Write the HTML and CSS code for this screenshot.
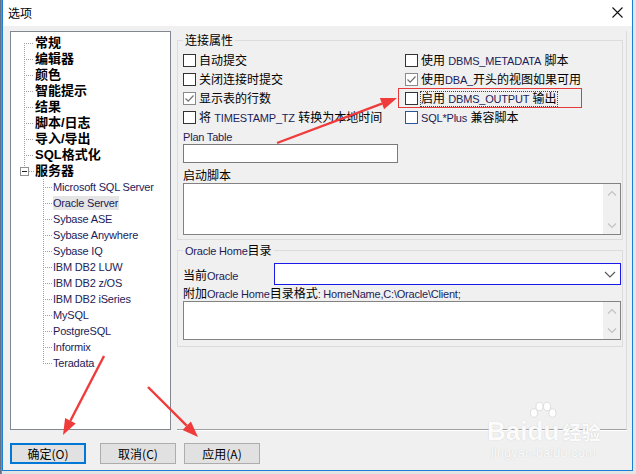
FILE: index.html
```html
<!DOCTYPE html>
<html lang="zh-CN">
<head>
    <meta charset="UTF-8">
    <title>选项</title>
    <link rel="stylesheet" href="styles.css">
</head>
<body>
    <div class="win">
        <div class="titlebar">
            <span class="title">选项</span>
            <svg class="close" width="11" height="11" viewBox="0 0 11 11"><path d="M0.5 0.5 L10.5 10.5 M10.5 0.5 L0.5 10.5" stroke="#111" stroke-width="1.1" fill="none"/></svg>
        </div>
        <div class="body">
            <div class="main">
                <!-- 왼쪽 트리 -->
                <div class="tree">
                    <ul class="lv1">
                        <li class="first">常规</li>
                        <li>编辑器</li>
                        <li>颜色</li>
                        <li>智能提示</li>
                        <li>结果</li>
                        <li>脚本/日志</li>
                        <li>导入/导出</li>
                        <li>SQL格式化</li>
                        <li class="open"><span class="exp"><i></i></span>服务器</li>
                    </ul>
                    <ul class="lv2">
                        <li><span class="en">Microsoft SQL Server</span></li>
                        <li><span class="en sel">Oracle Server</span></li>
                        <li><span class="en">Sybase ASE</span></li>
                        <li><span class="en">Sybase Anywhere</span></li>
                        <li><span class="en">Sybase IQ</span></li>
                        <li><span class="en">IBM DB2 LUW</span></li>
                        <li><span class="en">IBM DB2 z/OS</span></li>
                        <li><span class="en">IBM DB2 iSeries</span></li>
                        <li><span class="en">MySQL</span></li>
                        <li><span class="en">PostgreSQL</span></li>
                        <li><span class="en">Informix</span></li>
                        <li class="last"><span class="en">Teradata</span></li>
                    </ul>
                </div>
                <!-- 오른쪽 설정 -->
                <div class="panel">
                    <fieldset class="grp grp1">
                        <legend>连接属性</legend>
                        <div class="checks">
                            <label class="chk"><span class="cb"></span>自动提交</label>
                            <label class="chk"><span class="cb"></span>使用&nbsp;<span class="en">DBMS_METADATA</span>&nbsp;脚本</label>
                            <label class="chk"><span class="cb"></span>关闭连接时提交</label>
                            <label class="chk"><span class="cb on"><svg width="11" height="11" viewBox="0 0 11 11"><path d="M1.5 5.5 L4.2 8.2 L9.5 2.5" stroke="#707070" stroke-width="1.2" fill="none"/></svg></span>使用<span class="en">DBA_</span>开头的视图如果可用</label>
                            <label class="chk"><span class="cb on"><svg width="11" height="11" viewBox="0 0 11 11"><path d="M1.5 5.5 L4.2 8.2 L9.5 2.5" stroke="#707070" stroke-width="1.2" fill="none"/></svg></span>显示表的行数</label>
                            <label class="chk"><span class="cb"></span><span class="focus">启用&nbsp;<span class="en">DBMS_OUTPUT</span>&nbsp;输出</span></label>
                            <label class="chk"><span class="cb"></span>将&nbsp;<span class="en">TIMESTAMP_TZ</span>&nbsp;转换为本地时间</label>
                            <label class="chk"><span class="cb blue"></span><span class="en">SQL*Plus</span>&nbsp;兼容脚本</label>
                        </div>
                        <div class="cap en">Plan Table</div>
                        <div class="input"></div>
                        <div class="cap cap2">启动脚本</div>
                        <div class="memo memo1">
                            <div class="memo-text"></div>
                            <div class="vscroll">
                                <svg width="10" height="7" viewBox="0 0 10 7"><path d="M1 5.5 L5 1.5 L9 5.5" stroke="#c2c2c2" stroke-width="1.2" fill="none"/></svg>
                                <svg width="10" height="7" viewBox="0 0 10 7"><path d="M1 1.5 L5 5.5 L9 1.5" stroke="#c2c2c2" stroke-width="1.2" fill="none"/></svg>
                            </div>
                        </div>
                    </fieldset>
                    <fieldset class="grp grp2">
                        <legend><span class="en">Oracle Home</span>目录</legend>
                        <div class="combo-row">
                            <span class="combo-label">当前<span class="en">Oracle</span></span>
                            <div class="combo">
                                <svg width="12" height="7" viewBox="0 0 12 7"><path d="M1 1 L6 6 L11 1" stroke="#555" stroke-width="1.1" fill="none"/></svg>
                            </div>
                        </div>
                        <div class="cap cap3">附加<span class="en">Oracle Home</span>目录格式<span class="en">: HomeName,C:\Oracle\Client;</span></div>
                        <div class="memo memo2">
                            <div class="memo-text"></div>
                            <div class="vscroll">
                                <svg width="10" height="7" viewBox="0 0 10 7"><path d="M1 5.5 L5 1.5 L9 5.5" stroke="#c2c2c2" stroke-width="1.2" fill="none"/></svg>
                                <svg width="10" height="7" viewBox="0 0 10 7"><path d="M1 1.5 L5 5.5 L9 1.5" stroke="#c2c2c2" stroke-width="1.2" fill="none"/></svg>
                            </div>
                        </div>
                    </fieldset>
                </div>
            </div>
            <div class="buttons">
                <button class="btn primary">确定(O)</button>
                <button class="btn cancel">取消(C)</button>
                <button class="btn apply">应用(A)</button>
            </div>
        </div>
        <!-- 워터마크 -->
        <div class="watermark">
            <div class="wm-top">
                <span class="wm-bai">Bai</span>
                <span class="wm-du">
                    <svg class="paw" width="32" height="20" viewBox="0 0 32 20">
                        <ellipse cx="7" cy="11" rx="3.5" ry="4.2"/>
                        <ellipse cx="12.5" cy="4.5" rx="3.5" ry="4.2"/>
                        <ellipse cx="20" cy="4.5" rx="3.5" ry="4.2"/>
                        <ellipse cx="25.5" cy="11" rx="3.5" ry="4.2"/>
                    </svg>du</span>
                <span class="wm-jy">经验</span>
            </div>
            <div class="wm-url">jingyan.baidu.com</div>
        </div>
    </div>

    <!-- 빨간 화살표 표시 -->
    <svg class="marks" width="636" height="474" viewBox="0 0 636 474">
        <rect x="398.5" y="88.5" width="183" height="19" fill="none" stroke="#e53a3a" stroke-width="1"/>
        <line x1="277" y1="143" x2="382" y2="103.6" stroke="#ef3b3b" stroke-width="2.4"/>
        <polygon points="397,98 384.1,109.2 379.9,98" fill="#ef3b3b"/>
        <line x1="104" y1="356" x2="70.4" y2="420.8" stroke="#ef3b3b" stroke-width="2.4"/>
        <polygon points="63,435 75.7,423.6 65.1,418" fill="#ef3b3b"/>
        <line x1="148" y1="387" x2="186.7" y2="425.7" stroke="#ef3b3b" stroke-width="2.4"/>
        <polygon points="198,437 190.9,421.5 182.5,429.9" fill="#ef3b3b"/>
    </svg>
</body>
</html>
```

FILE: styles.css
```css
* {
    box-sizing: border-box;
}
body {
    margin: 0;
    width: 636px;
    height: 474px;
    position: relative;
    overflow: hidden;
    background: linear-gradient(to right, #3f6aa3 0, #d2883c 2px, #e4e4e4 2px);
    font-family: "Liberation Sans", "Noto Sans CJK SC", sans-serif;
    font-size: 12px;
    color: #000;
}
.en {
    font-family: "Liberation Sans", sans-serif;
    font-size: 11px;
    letter-spacing: -0.2px;
    color: #1c1c58;
}
.win {
    position: relative;
    margin-left: 2px;
    width: 631px;
    height: 471px;
    border: 1px solid #1b7fd4;
    border-top: none;
    background-color: #f0f0f0;
}
.titlebar {
    height: 26px;
    background-color: #fff;
    display: flex;
    align-items: center;
    justify-content: space-between;
    padding: 0 9px 0 5px;
}
.title {
    line-height: 26px;
    font-family: "Noto Sans CJK SC", sans-serif;
}
.close {
    margin-top: -1px;
}
.body {
    height: 444px;
}
.main {
    display: grid;
    grid-template-columns: 161px 450px;
    column-gap: 6px;
    padding: 5px 0 0 7px;
    height: 404px;
}

/* 트리 */
.tree {
    height: 399px;
    border: 1px solid #828790;
    background-color: #fff;
    padding-top: 3px;
}
.tree ul {
    list-style: none;
    margin: 0;
    padding: 0;
}
.tree li {
    height: 16px;
    line-height: 16px;
    white-space: nowrap;
}
.lv1 li {
    padding-left: 24px;
    font-size: 13px;
    font-weight: bold;
}
.lv1 li::before,
.lv2 li::before {
    content: "";
    display: inline-block;
    vertical-align: top;
    height: 16px;
    background:
        repeating-linear-gradient(to bottom, #a0a0a0 0 1px, transparent 1px 2px) 0 0 / 1px 16px no-repeat,
        repeating-linear-gradient(to right, #a0a0a0 0 1px, transparent 1px 2px) 0 8px / 100% 1px no-repeat;
}
.lv1 li::before {
    width: 10px;
    margin-left: -11px;
    margin-right: 1px;
}
.lv1 li.first::before {
    background:
        repeating-linear-gradient(to bottom, #a0a0a0 0 1px, transparent 1px 2px) 0 8px / 1px 8px no-repeat,
        repeating-linear-gradient(to right, #a0a0a0 0 1px, transparent 1px 2px) 0 8px / 100% 1px no-repeat;
}
.lv1 li.open::before {
    display: none;
}
.exp {
    display: inline-flex;
    align-items: center;
    vertical-align: top;
    width: 15px;
    height: 16px;
    margin-left: -15px;
    background:
        repeating-linear-gradient(to bottom, #a0a0a0 0 1px, transparent 1px 2px) 4px 0 / 1px 4px no-repeat,
        repeating-linear-gradient(to right, #a0a0a0 0 1px, transparent 1px 2px) 9px 8px / 5px 1px no-repeat;
}
.exp i {
    display: block;
    width: 9px;
    height: 9px;
    margin-top: 1px;
    border: 1px solid #919191;
    background: #fff linear-gradient(#222, #222) center / 5px 1px no-repeat;
}
.lv2 li {
    padding-left: 42px;
}
.lv2 li::before {
    width: 9px;
    margin-left: -10px;
    margin-right: 1px;
}
.lv2 li.last::before {
    background:
        repeating-linear-gradient(to bottom, #a0a0a0 0 1px, transparent 1px 2px) 0 0 / 1px 9px no-repeat,
        repeating-linear-gradient(to right, #a0a0a0 0 1px, transparent 1px 2px) 0 8px / 100% 1px no-repeat;
}
.sel {
    background-color: #e5e5e5;
    padding: 1px 1px 1px 0;
}

/* 오른쪽 패널 */
.panel {
    height: 399px;
    border-right: 1px solid #dcdcdc;
    border-bottom: 1px solid #a0a0a0;
    box-shadow: 0 1px 0 #fff;
}
.grp {
    width: 446px;
    margin: 0;
    border: 1px solid #dcdcdc;
    min-width: 0;
}
.grp legend {
    padding: 0 2px;
    line-height: 14px;
    font-size: 12px;
    font-family: "Noto Sans CJK SC", sans-serif;
}
.grp legend .en {
    font-size: 11px;
}
.grp1 {
    margin-top: 2px;
    padding: 4px 1px 4px 5px;
}
.grp2 {
    margin-top: 3px;
    padding: 5px 1px 6px 5px;
}
.checks {
    display: grid;
    grid-template-columns: 222px 1fr;
    grid-auto-rows: 19px;
    align-items: center;
}
.chk {
    display: flex;
    align-items: center;
    line-height: 14px;
    white-space: nowrap;
}
.cb {
    flex: none;
    display: flex;
    align-items: center;
    justify-content: center;
    width: 13px;
    height: 13px;
    margin-right: 3px;
    border: 1px solid #333;
    background-color: #fff;
}
.cb.on {
    border-color: #8a8a8a;
}
.cb.blue {
    border-color: #2b5797;
}
.focus {
    outline: 1px dotted #444;
    outline-offset: 0;
}
.cap {
    margin-top: 3px;
    line-height: 14px;
    white-space: nowrap;
}
.cap2 {
    margin-top: 6px;
}
.cap3 {
    margin-top: 2px;
}
.input {
    width: 215px;
    height: 19px;
    border: 1px solid #7a7a7a;
    background-color: #fff;
}
.memo {
    display: flex;
    width: 438px;
    border: 1px solid #828282;
    background-color: #fff;
}
.memo1 {
    height: 52px;
}
.memo2 {
    height: 39px;
}
.memo-text {
    flex: 1;
}
.vscroll {
    width: 17px;
    background-color: #f0f0f0;
    display: flex;
    flex-direction: column;
    justify-content: space-between;
    align-items: center;
    padding: 6px 0 5px;
}
.combo-row {
    display: flex;
    align-items: flex-start;
}
.combo-label {
    width: 91px;
    padding-top: 6px;
    line-height: 14px;
    white-space: nowrap;
}
.combo {
    width: 347px;
    height: 22px;
    border: 1px solid #1a1ae8;
    background-color: #fff;
    display: flex;
    align-items: center;
    justify-content: flex-end;
    padding-right: 4px;
}

/* 버튼 */
.buttons {
    display: flex;
    padding: 13px 0 0 7px;
}
.btn {
    width: 76px;
    height: 21px;
    padding: 0;
    border: 1px solid #adadad;
    background-color: #e1e1e1;
    font-family: "Noto Sans CJK SC", sans-serif;
    font-size: 12px;
    line-height: 17px;
    color: #000;
}
.btn.primary {
    border: 2px solid #0078d7;
}
.btn.cancel {
    margin-left: 14px;
}
.btn.apply {
    margin-left: 8px;
}

/* 워터마크 */
.watermark {
    position: absolute;
    left: 484px;
    top: 402px;
    color: rgba(255, 255, 255, 0.95);
    text-shadow: 0 0 1px #c4c4c4;
}
.wm-top {
    display: flex;
    align-items: flex-end;
    height: 42px;
}
.wm-bai,
.wm-du {
    font-family: "Liberation Sans", sans-serif;
    font-size: 26px;
    font-weight: bold;
    line-height: 26px;
}
.wm-du {
    display: flex;
    flex-direction: column;
    align-items: center;
}
.paw {
    fill: rgba(255, 255, 255, 0.95);
    stroke: #cccccc;
    stroke-width: 0.6;
    margin-bottom: -4px;
}
.wm-jy {
    font-family: "Noto Sans CJK SC", sans-serif;
    font-size: 19px;
    font-weight: bold;
    line-height: 24px;
    margin-left: 3px;
}
.wm-url {
    font-family: "Liberation Sans", sans-serif;
    font-size: 13px;
    line-height: 14px;
    margin-top: 2px;
    margin-left: 4px;
}
.marks {
    position: absolute;
    left: 0;
    top: 0;
    pointer-events: none;
}
```
